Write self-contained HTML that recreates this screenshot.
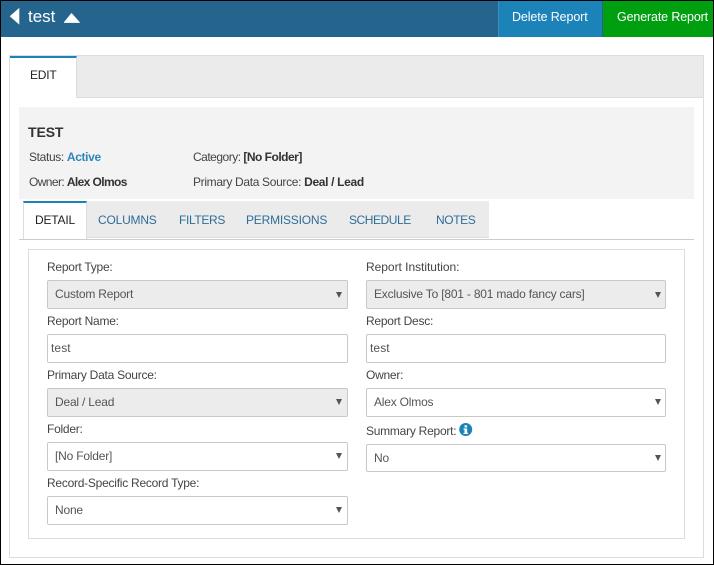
<!DOCTYPE html>
<html><head><meta charset="utf-8">
<style>
html,body{margin:0;padding:0;background:#fff}
#p{position:relative;width:714px;height:565px;overflow:hidden;background:#fff;font-family:"Liberation Sans",sans-serif;font-size:12px;color:#444}
#p div,#p span.t{position:absolute;box-sizing:border-box}
.t{white-space:nowrap;line-height:16px;height:16px}
.l{color:#444;letter-spacing:-.25px}
.f{height:29px;border:1px solid #c8c8c8;border-radius:2px;background:#fff}
.d{background:#ececec}
.a{width:0;height:0;border-left:3.500px solid transparent;border-right:3.500px solid transparent;border-top:6px solid #555}
.v{color:#555;letter-spacing:-.2px}
.tb{color:#2f6d99;font-size:12px;letter-spacing:-.2px}
b{color:#333}
</style></head><body>
<div id="p">
<div style="left:1px;top:1px;width:712px;height:36px;background:#25648c"></div>
<div style="left:498px;top:1px;width:105px;height:36px;background:#1c83b9;border-left:1px solid #3d90bd;border-right:1px solid #25648c"></div>
<div style="left:603px;top:1px;width:110px;height:36px;background:#009f0f"></div>
<svg style="position:absolute;left:9px;top:8px" width="12" height="17"><path d="M10 .5V16L1.200 8.200Z" fill="#fff" stroke="#fff" stroke-width=".6"/></svg>
<span class="t" style="left:28px;top:8px;color:#fff;font-size:17px;line-height:18px;height:18px">test</span>
<svg style="position:absolute;left:63px;top:12px" width="18" height="12"><path d="M1.200 10.500L8.500 1.500L16.500 10.500Z" fill="#fff" stroke="#fff" stroke-width=".8" stroke-linejoin="round"/></svg>
<span class="t" style="left:512px;top:9px;color:#fff;font-size:12.500px;letter-spacing:-.12px">Delete Report</span>
<span class="t" style="left:617px;top:9px;color:#fff;font-size:12.500px;letter-spacing:-.14px">Generate Report</span>

<div style="left:9px;top:55px;width:695px;height:503px;border:1px solid #ddd;background:#fff"></div>
<div style="left:10px;top:56px;width:693px;height:42px;background:#ebebeb;border-bottom:1px solid #ddd"></div>
<div style="left:10px;top:56px;width:67px;height:42px;background:#fff;border-top:2px solid #1c83b9;border-right:1px solid #ddd"></div>
<span class="t" style="left:30px;top:67px;color:#222;letter-spacing:-.2px">EDIT</span>

<div style="left:19px;top:107px;width:675px;height:92px;background:#f3f3f3"></div>
<span class="t" style="left:28px;top:124px;font-size:14px;font-weight:bold;color:#333;letter-spacing:-.1px">TEST</span>
<span class="t" style="left:29px;top:149px;letter-spacing:-.35px">Status: <b style="color:#2f86bd">Active</b></span>
<span class="t" style="left:29px;top:174px;letter-spacing:-.6px">Owner: <b>Alex Olmos</b></span>
<span class="t" style="left:193px;top:149px;letter-spacing:-.5px">Category: <b>[No Folder]</b></span>
<span class="t" style="left:193px;top:174px;letter-spacing:-.33px">Primary Data Source: <b>Deal / Lead</b></span>

<div style="left:23px;top:201px;width:466px;height:37px;background:#ebebeb;border-bottom:1px solid #ddd"></div>
<div style="left:23px;top:201px;width:64px;height:38px;background:#fff;border-top:2px solid #1c83b9;border-left:1px solid #ddd;border-right:1px solid #ddd"></div>
<div style="left:19px;top:239px;width:675px;height:1px;background:#ccc"></div>
<span class="t tb" style="left:35px;top:212px;color:#222">DETAIL</span>
<span class="t tb" style="left:98px;top:212px">COLUMNS</span>
<span class="t tb" style="left:179px;top:212px;letter-spacing:-.35px">FILTERS</span>
<span class="t tb" style="left:246px;top:212px">PERMISSIONS</span>
<span class="t tb" style="left:349px;top:212px;letter-spacing:-.45px">SCHEDULE</span>
<span class="t tb" style="left:436px;top:212px;letter-spacing:-.4px">NOTES</span>

<div style="left:28px;top:249px;width:657px;height:290px;border:1px solid #ddd"></div>

<span class="t l" style="left:47px;top:259px">Report Type:</span>
<div class="f d" style="left:47px;top:280px;width:301px"></div>
<span class="t v" style="left:55px;top:286px">Custom Report</span>
<div class="a" style="left:336px;top:292px"></div>

<span class="t l" style="left:47px;top:313px">Report Name:</span>
<div class="f" style="left:47px;top:334px;width:301px"></div>
<span class="t v" style="left:51px;top:340px;letter-spacing:.1px">test</span>

<span class="t l" style="left:47px;top:367px">Primary Data Source:</span>
<div class="f d" style="left:47px;top:388px;width:301px"></div>
<span class="t v" style="left:55px;top:394px">Deal / Lead</span>
<div class="a" style="left:336px;top:399px"></div>

<span class="t l" style="left:47px;top:421px">Folder:</span>
<div class="f" style="left:47px;top:442px;width:301px"></div>
<span class="t v" style="left:55px;top:448px">[No Folder]</span>
<div class="a" style="left:336px;top:453px"></div>

<span class="t l" style="left:47px;top:475px">Record-Specific Record Type:</span>
<div class="f" style="left:47px;top:496px;width:301px"></div>
<span class="t v" style="left:55px;top:502px">None</span>
<div class="a" style="left:336px;top:507px"></div>

<span class="t l" style="left:366px;top:259px;letter-spacing:-.03px">Report Institution:</span>
<div class="f d" style="left:366px;top:280px;width:300px"></div>
<span class="t v" style="left:374px;top:286px">Exclusive To [801 - 801 mado fancy cars]</span>
<div class="a" style="left:655px;top:292px"></div>

<span class="t l" style="left:366px;top:313px">Report Desc:</span>
<div class="f" style="left:366px;top:334px;width:300px"></div>
<span class="t v" style="left:370px;top:340px;letter-spacing:.1px">test</span>

<span class="t l" style="left:366px;top:367px">Owner:</span>
<div class="f" style="left:366px;top:388px;width:300px"></div>
<span class="t v" style="left:374px;top:394px">Alex Olmos</span>
<div class="a" style="left:655px;top:399px"></div>

<span class="t l" style="left:366px;top:423px">Summary Report:</span>
<svg style="position:absolute;left:459px;top:423px" width="14" height="14"><circle cx="6.700" cy="6.500" r="6.500" fill="#1c83b9"/><rect x="5.500" y="2.300" width="2.600" height="2.200" fill="#fff"/><path d="M4.500 5.500H8.100V9.700H9.100V11H4.500V9.700H5.500V6.800H4.500Z" fill="#fff"/></svg>
<div class="f" style="left:366px;top:444px;width:300px;height:28px"></div>
<span class="t v" style="left:374px;top:450px">No</span>
<div class="a" style="left:655px;top:455px"></div>

<div style="left:0;top:0;width:714px;height:1px;background:#000"></div>
<div style="left:0;top:564px;width:714px;height:1px;background:#000"></div>
<div style="left:0;top:0;width:1px;height:565px;background:#000"></div>
<div style="left:713px;top:0;width:1px;height:565px;background:#000"></div>
</div>
</body></html>
